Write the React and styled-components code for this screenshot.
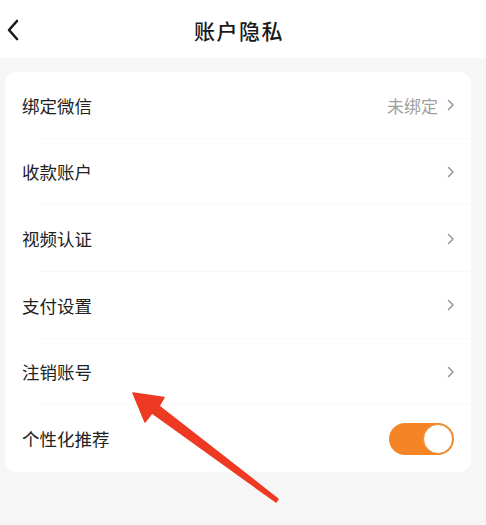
import React from 'react';
import styled, { createGlobalStyle } from 'styled-components';

const GlobalStyle = createGlobalStyle`
  body {
    margin: 0;
    font-family: "Noto Sans CJK SC", "Noto Sans", sans-serif;
    background: #f6f6f6;
  }
`;

const rows = [
  { label: '绑定微信', value: '未绑定' },
  { label: '收款账户' },
  { label: '视频认证' },
  { label: '支付设置' },
  { label: '注销账号' },
];

const Chevron = () => (
  <svg width="8" height="12" viewBox="0 0 8 12">
    <path d="M1.5 1.5 L6 6 L1.5 10.5" fill="none" stroke="#9a9a9a" strokeWidth="1.6" strokeLinecap="round" strokeLinejoin="round" />
  </svg>
);

const App = () => {
  return (
    <Page>
      <GlobalStyle />
      <Header>
        <BackButton>
          <svg width="14" height="22" viewBox="0 0 14 22">
            <path d="M11 2 L3 11 L11 20" fill="none" stroke="#1a1a1a" strokeWidth="2.6" strokeLinecap="round" strokeLinejoin="round" />
          </svg>
        </BackButton>
        <Title>账户隐私</Title>
      </Header>
      <Card>
        {rows.map((r) => (
          <Row key={r.label}>
            <Label>{r.label}</Label>
            <Right>
              {r.value && <Value>{r.value}</Value>}
              <Chevron />
            </Right>
          </Row>
        ))}
        <Row last>
          <Label>个性化推荐</Label>
          <Toggle on>
            <Knob />
          </Toggle>
        </Row>
      </Card>
      <Arrow viewBox="0 0 486 525" width="486" height="525">
        <path
          d="M133 393 L164 397.5 L159 406 L278 499 L276 502 L152 413 L145 422 Z"
          fill="#ee3a22"
          strokeLinejoin="round"
          stroke="#ee3a22"
          strokeWidth="1.5"
        />
      </Arrow>
    </Page>
  );
};

const Page = styled.div`
  position: relative;
  width: 486px;
  height: 525px;
  overflow: hidden;
  background: #f6f6f6;
`;

const Header = styled.div`
  position: relative;
  height: 58px;
  background: #ffffff;
  display: flex;
  align-items: center;
  justify-content: center;
`;

const BackButton = styled.div`
  position: absolute;
  left: 6px;
  top: 19px;
  display: flex;
`;

const Title = styled.div`
  font-size: 21px;
  font-weight: 500;
  color: #1a1a1a;
  letter-spacing: 1.5px;
  margin: 2px 8px 0 0;
`;

const Card = styled.div`
  margin: 14px 15px 0 5px;
  background: #ffffff;
  border-radius: 12px;
  display: flex;
  flex-direction: column;
`;

const Row = styled.div`
  height: 66.67px;
  box-sizing: border-box;
  display: flex;
  align-items: center;
  justify-content: space-between;
  padding: 0 16px 0 17px;
  position: relative;

  &::after {
    content: '';
    display: ${(p) => (p.last ? 'none' : 'block')};
    position: absolute;
    left: 32px;
    right: 0;
    bottom: 0;
    height: 1px;
    background: #f9f9f9;
  }
`;

const Label = styled.div`
  font-size: 17.5px;
  color: #222222;
`;

const Right = styled.div`
  display: flex;
  align-items: center;
  gap: 9px;
`;

const Value = styled.div`
  font-size: 17px;
  color: #a0a0a0;
`;

const Toggle = styled.div`
  width: 65px;
  height: 32px;
  border-radius: 16px;
  background: ${(p) => (p.on ? '#f58426' : '#e5e5e5')};
  display: flex;
  align-items: center;
  justify-content: ${(p) => (p.on ? 'flex-end' : 'flex-start')};
  padding: 0 1px;
  box-sizing: border-box;
  margin-right: 1px;
`;

const Knob = styled.div`
  width: 30px;
  height: 30px;
  border-radius: 50%;
  background: #ffffff;
  box-sizing: border-box;
  border: 1.5px solid #e8922e;
`;

const Arrow = styled.svg`
  position: absolute;
  left: 0;
  top: 0;
  pointer-events: none;
`;

export default App;
